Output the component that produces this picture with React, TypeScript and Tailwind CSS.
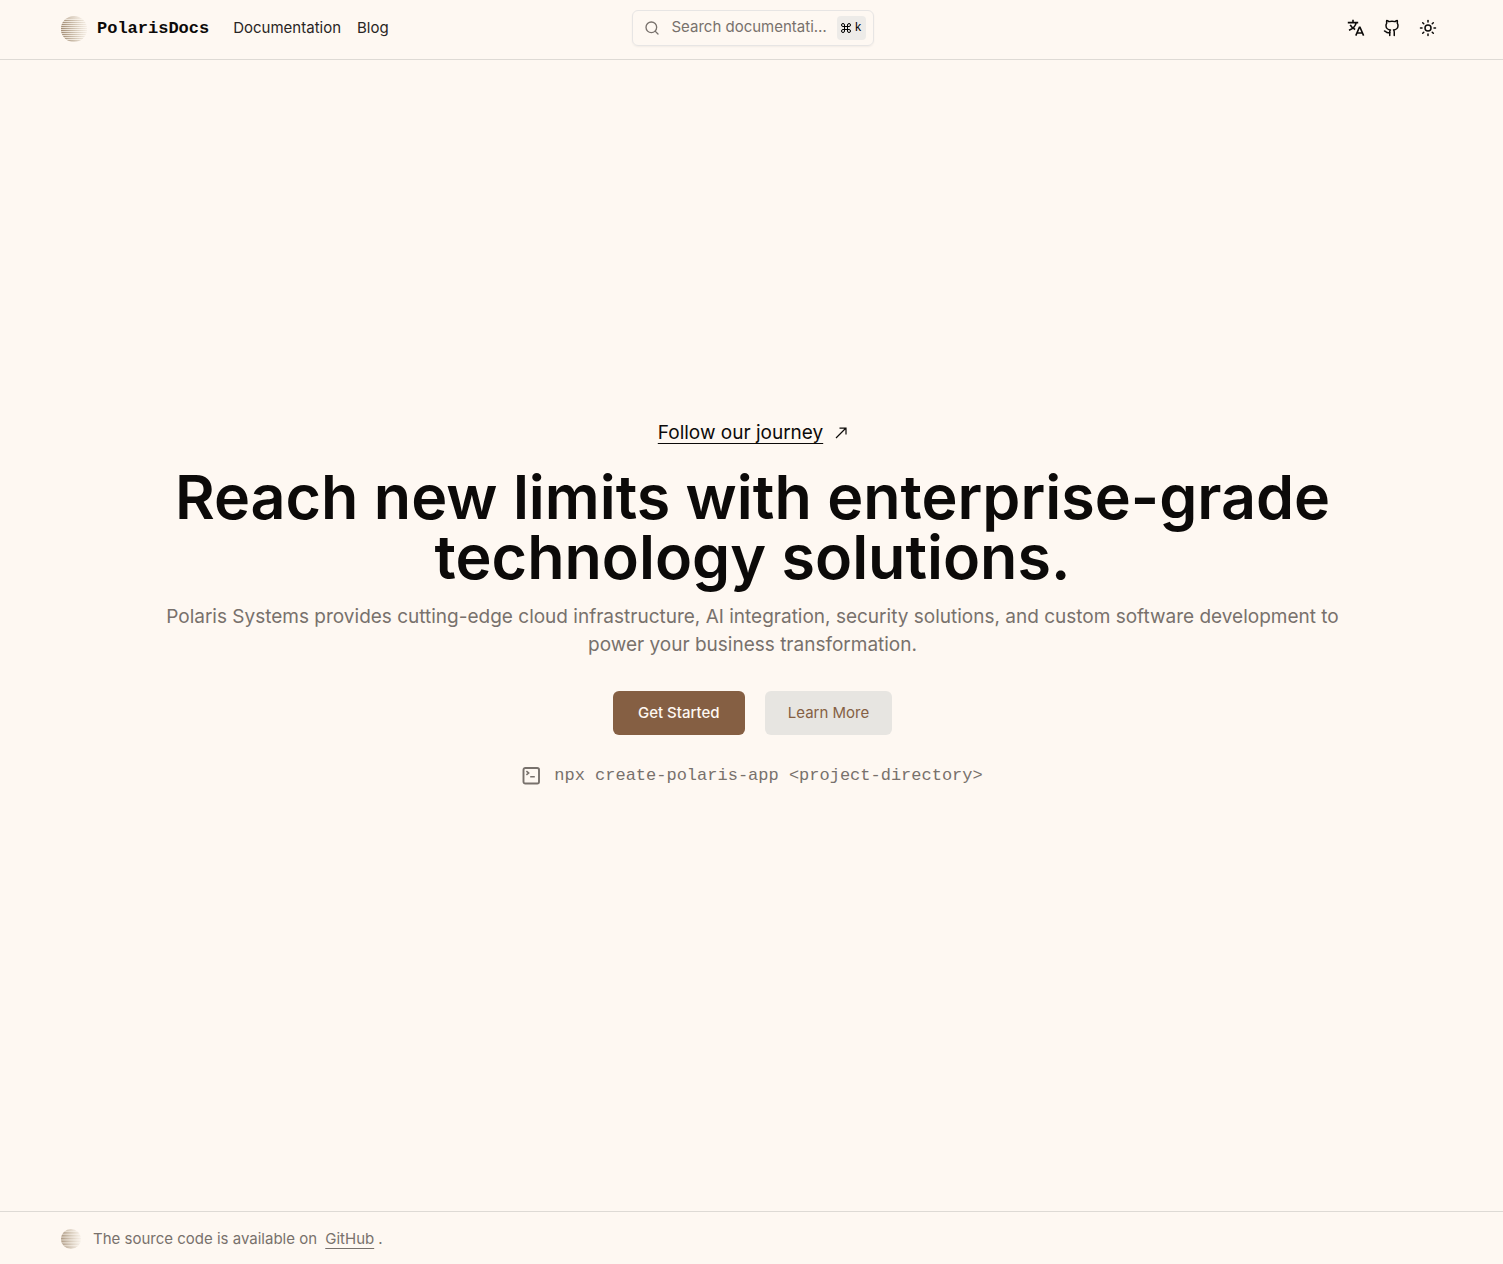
import { Command, Github, Search, Sun } from "lucide-react";

function Globe({ className, id }: { className: string; id: string }) {
  const lines = [3, 5, 7, 9, 11, 13, 15, 17, 19, 21, 23];
  return (
    <svg viewBox="0 0 26 26" className={className} aria-hidden="true">
      <defs>
        <linearGradient id={id + "-fill"} x1="0" x2="1" y1="0" y2="0">
          <stop offset="0" stopColor="#a08a70" stopOpacity="0.7" />
          <stop offset="1" stopColor="#c8b8a0" stopOpacity="0.04" />
        </linearGradient>
        <linearGradient id={id + "-line"} gradientUnits="userSpaceOnUse" x1="0" x2="26" y1="0" y2="0">
          <stop offset="0" stopColor="#846a4e" stopOpacity="0.85" />
          <stop offset="1" stopColor="#c8b8a0" stopOpacity="0.2" />
        </linearGradient>
        <clipPath id={id + "-clip"}>
          <circle cx="13" cy="13" r="13" />
        </clipPath>
      </defs>
      <g clipPath={`url(#${id}-clip)`}>
        <rect width="26" height="26" fill={`url(#${id}-fill)`} />
        {lines.map((y) => (
          <g key={y}>
            <rect y={y} width="26" height="1" fill="#fef8f2" fillOpacity="0.6" />
            <rect y={y + 1} width="26" height="0.6" fill={`url(#${id}-line)`} />
          </g>
        ))}
      </g>
    </svg>
  );
}

function TranslateIcon() {
  return (
    <svg viewBox="0 0 18 18" className="size-[18px]" fill="none" stroke="currentColor" strokeWidth="1.6" aria-hidden="true">
      <path d="M6 .8v2.4M.8 3.6h10.4M9.2 3.6C8.5 7 5.4 9.9 2 11.2M3.2 5.8c1 2 2.8 3.6 5 4.6" />
      <path d="M8.8 16.6 12.4 8.3h.6l3.6 8.3M10.2 14h5" />
    </svg>
  );
}

function ArrowIcon() {
  return (
    <svg viewBox="0 0 12 12" className="size-3" fill="none" stroke="currentColor" strokeWidth="1.2" aria-hidden="true">
      <path d="M1 11 11 1M4.5 1.2H11v6.3" />
    </svg>
  );
}

function TerminalIcon() {
  return (
    <svg viewBox="0 0 18 18" className="size-[18px]" fill="none" stroke="currentColor" aria-hidden="true">
      <rect x="1.5" y="1" width="15.5" height="15.5" rx="1.8" strokeWidth="1.9" />
      <path d="M4.4 4.2 6.6 6 4.4 7.8M8.2 9.8h4.6" strokeWidth="1.6" />
    </svg>
  );
}

export default function App() {
  return (
    <div className="flex min-h-screen flex-col bg-[#fef8f2] font-['Inter',sans-serif] text-[#0c0a09]">
      <header className="grid h-15 grid-cols-[1fr_auto_1fr] items-center border-b border-[#dedad5] pr-[59px] pb-1 pl-[61px]">
        <div className="flex items-center pt-0.5">
          <a href="#home" className="flex items-center gap-2.5 font-['Liberation_Mono',monospace] text-[17px] font-bold">
            <Globe id="head" className="size-[26px]" />
            PolarisDocs
          </a>
          <nav className="ml-6 flex gap-4 text-[15px] text-[#292524]">
            <a href="#docs">Documentation</a>
            <a href="#blog">Blog</a>
          </nav>
        </div>
        <button className="flex h-9 w-[242px] items-center rounded-md border border-[#e7e5e4] pr-[7px] pl-[11px] text-[15px] text-[#78716c] shadow-xs">
          <Search className="mr-3 size-4 shrink-0" />
          <span className="flex-1 text-left whitespace-nowrap">Search documentati…</span>
          <kbd className="ml-2 flex h-6 w-[29px] shrink-0 items-center justify-center gap-0.5 rounded bg-[#edebe8] font-['Liberation_Mono',monospace] text-xs text-black">
            <Command className="size-3" aria-label="⌘" />k
          </kbd>
        </button>
        <div className="flex items-center justify-end gap-[18px] pr-[7px]">
          <button aria-label="Language"><TranslateIcon /></button>
          <a href="#github" aria-label="GitHub"><Github className="size-[18px]" /></a>
          <button aria-label="Theme"><Sun className="size-[18px]" /></button>
        </div>
      </header>

      <main className="flex flex-1 flex-col items-center justify-center pr-8 pb-16 pl-[34px] text-center">
        <a href="#journey" className="flex items-center gap-3 text-[19px] leading-7">
          <span className="underline underline-offset-4">Follow our journey</span>
          <ArrowIcon />
        </a>
        <h1 className="mt-5 max-w-[1200px] text-[61px] leading-[60px] font-semibold">
          Reach new limits with enterprise-grade technology solutions.
        </h1>
        <p className="mt-4 max-w-[1200px] text-[19px] leading-7 text-[#78716c]">
          Polaris Systems provides cutting-edge cloud infrastructure, AI integration, security solutions, and custom software development to power your business transformation.
        </p>
        <div className="mt-8 flex gap-5 text-[15px]">
          <a href="#start" className="flex h-11 min-w-33 items-center justify-center rounded-md bg-[#855f43] px-6 font-medium text-[#fef8f2]">Get Started</a>
          <a href="#more" className="flex h-11 items-center rounded-md bg-[#e7e5e1] px-[23px] text-[#855f43]">Learn More</a>
        </div>
        <div className="mt-7 flex items-center gap-3.5 font-['Liberation_Mono',monospace] text-[17px] text-[#78716c]">
          <TerminalIcon />
          <code className="font-['Liberation_Mono',monospace]">npx create-polaris-app &lt;project-directory&gt;</code>
        </div>
      </main>

      <footer className="flex h-[53px] items-center border-t border-[#dedad5] pt-0.5 pr-[59px] pl-[61px] text-[15px] text-[#78716c]">
        <Globe id="foot" className="mr-3 size-5" />
        <p>The source code is available on <a href="#source" className="mx-1 underline underline-offset-4">GitHub</a>.</p>
      </footer>
    </div>
  );
}
